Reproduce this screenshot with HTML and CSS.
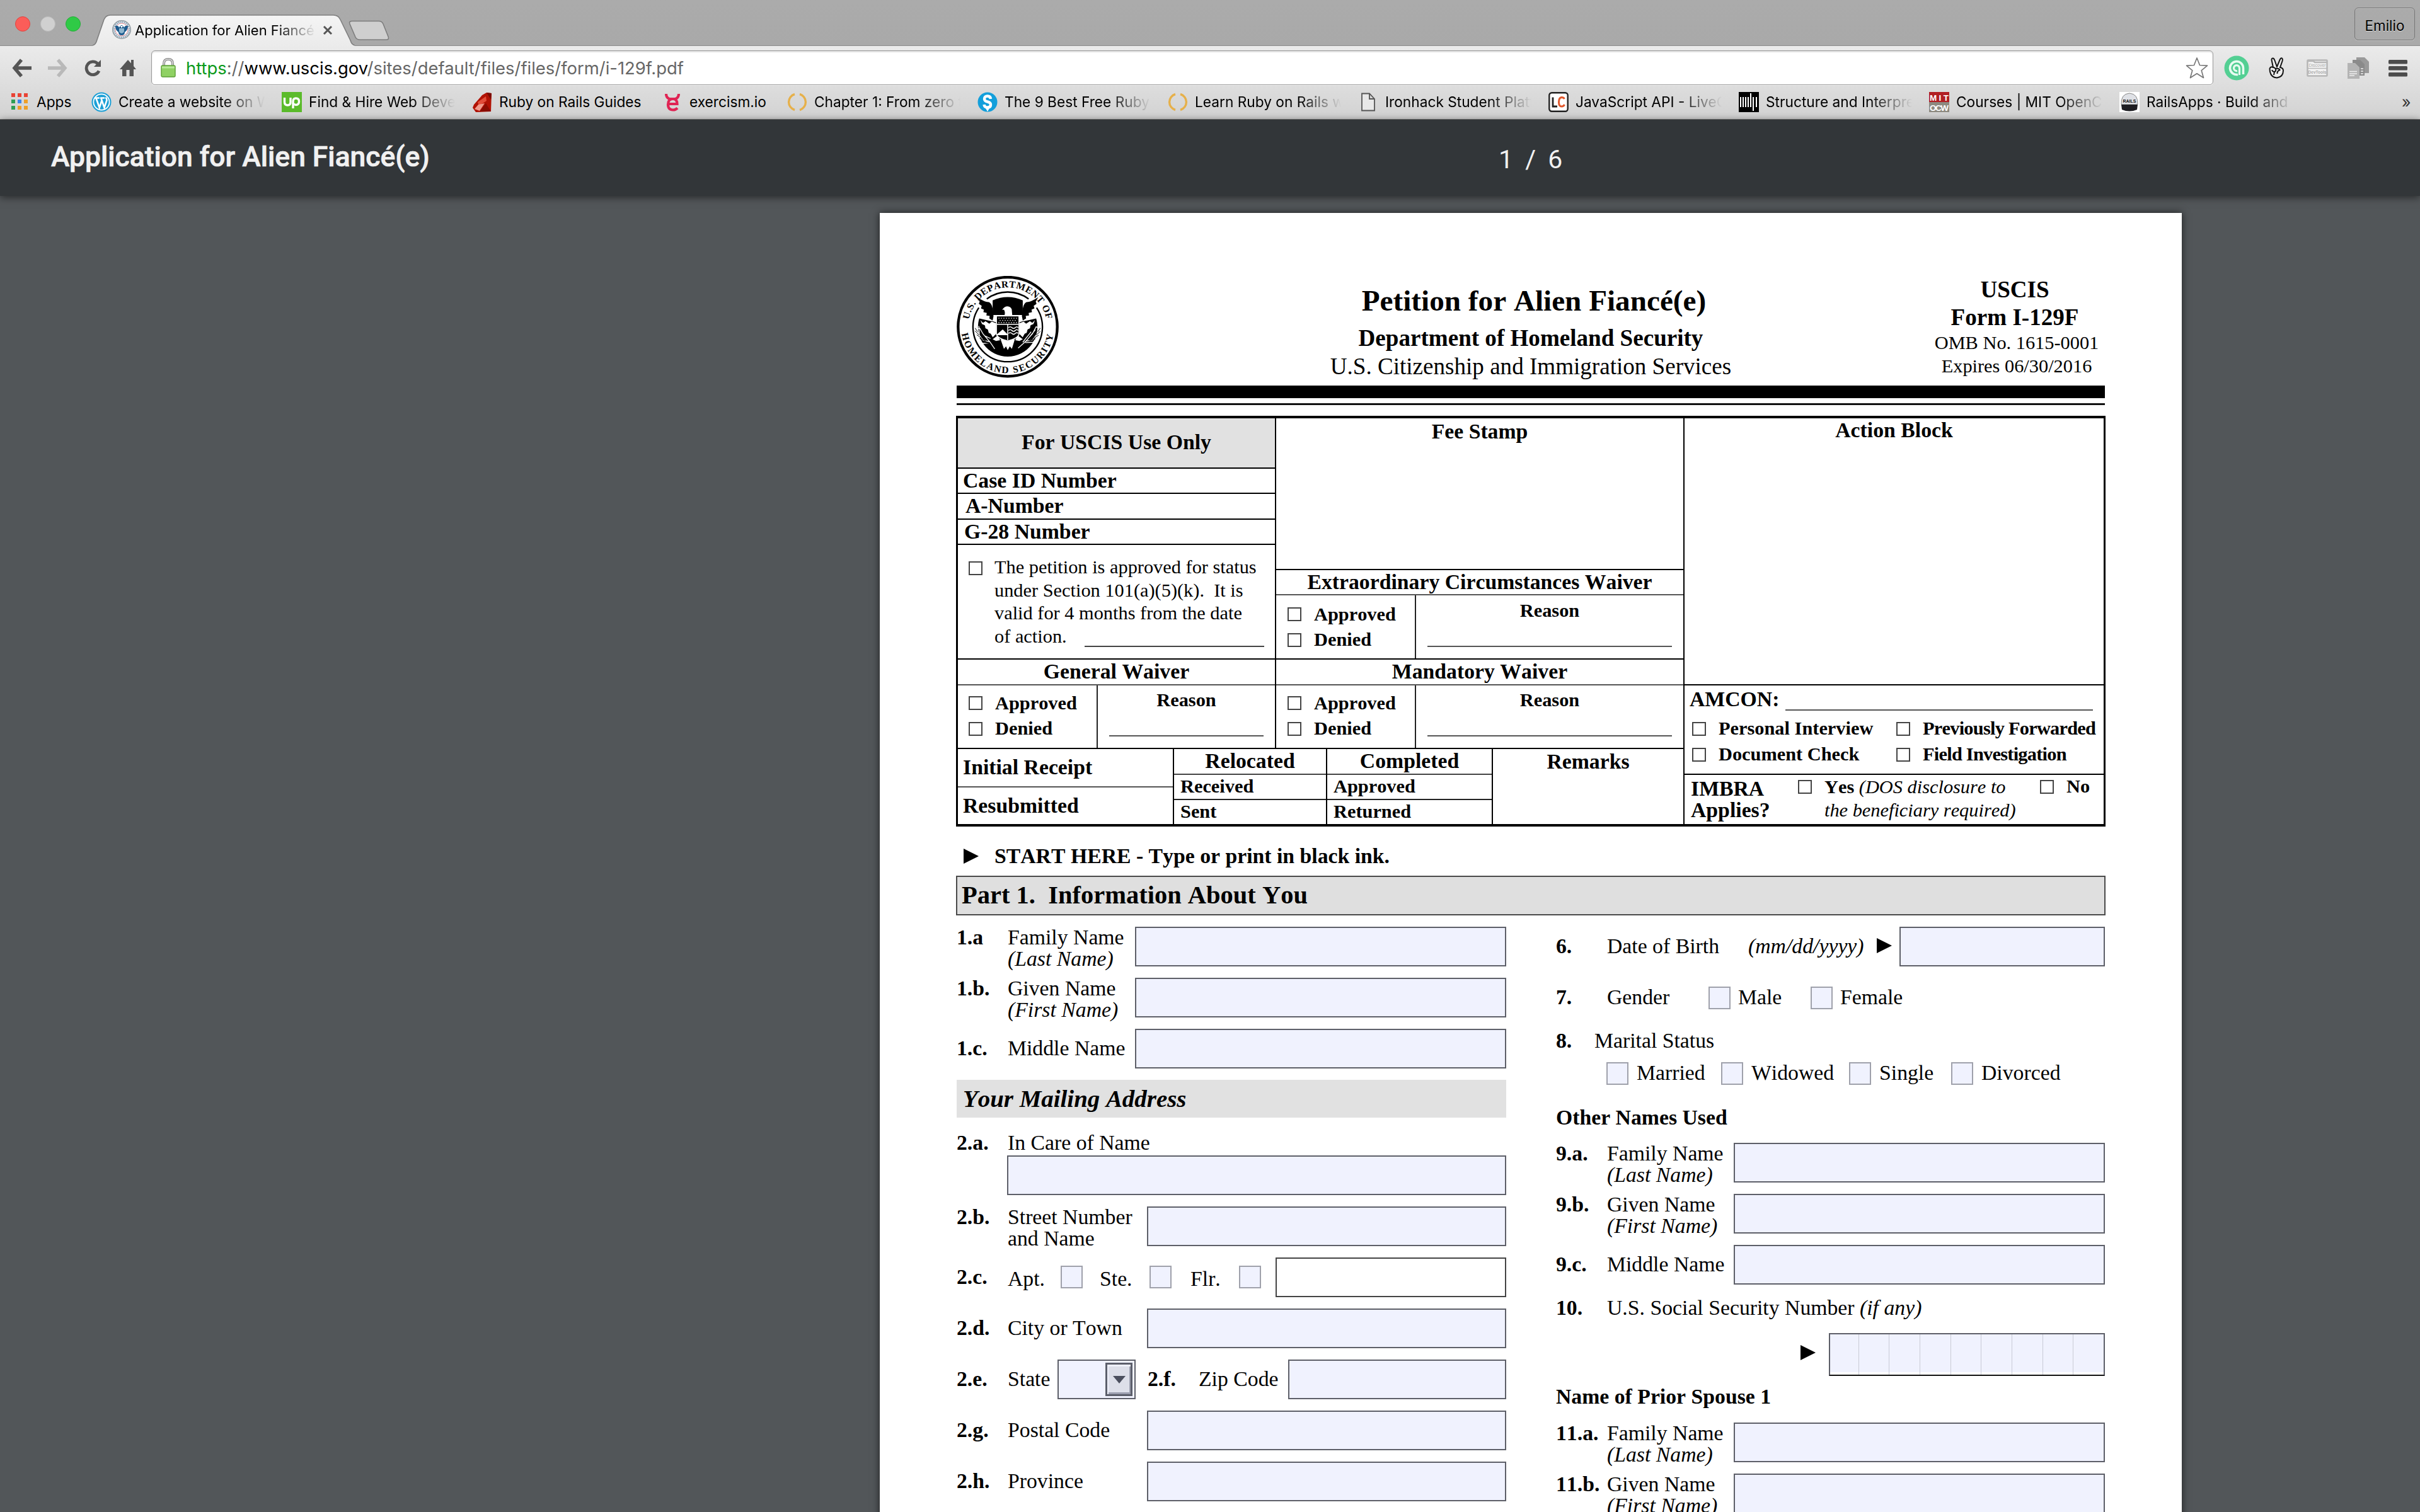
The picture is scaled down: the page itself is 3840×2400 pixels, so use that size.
FILE: index.html
```html
<!DOCTYPE html>
<html lang="en">
<head>
<meta charset="utf-8">
<title>Application for Alien Fiancé(e)</title>
<link rel="stylesheet" href="styles.css">
</head>
<body>
<header class="chrome">
  <div class="tabstrip">
    <div class="lights"><i class="light red"></i><i class="light off"></i><i class="light green"></i></div>
    <div class="tab">
      <svg class="tab-shape" viewBox="0 0 416 50" width="416" height="50"><defs><linearGradient id="tg" x1="0" y1="0" x2="0" y2="1"><stop offset="0" stop-color="#f4f4f4"/><stop offset="1" stop-color="#ebebeb"/></linearGradient></defs><path d="M0 49 Q5 48 7 40 L18 8 Q21 1 28 1 H382 Q390 1 393 8 L409 41 Q411 48 416 49 V50 H0 Z" fill="url(#tg)"/><path d="M0 49 Q5 48 7 40 L18 8 Q21 1 28 1 H382 Q390 1 393 8 L409 41 Q411 48 416 49" fill="none" stroke="#7f7f7f" stroke-width="1.6"/></svg>
      <svg class="favicon" viewBox="0 0 30 30" width="30" height="30"><circle cx="15" cy="15" r="14.2" fill="#e9edf0" stroke="#8d989f" stroke-width="1.5"/><circle cx="15" cy="15" r="12" fill="none" stroke="#7a98ae" stroke-width="2" stroke-dasharray="1.6 1.4"/><circle cx="15" cy="15" r="10" fill="#fff" stroke="#e08a90" stroke-width="1"/><path d="M5 9 Q10 8 11 12 Q15 4 19 12 Q20 8 25 9 Q25 16 20 19 Q20 24 15 24 Q10 24 10 19 Q5 16 5 9Z" fill="#1d5c8e"/><path d="M11 13 h8 v4 q0 3-4 4 q-4-1-4-4z" fill="#8fb6cf"/><path d="M13 9h4l-2 4z" fill="#fff"/></svg>
      <span class="tab-title">Application for Alien Fiancé(e)</span>
      <svg class="tab-close" viewBox="0 0 16 16" width="16" height="16"><path d="M2 2 L14 14 M14 2 L2 14" stroke="#555" stroke-width="3"/></svg>
    </div>
    <svg class="newtab" viewBox="0 0 66 34" width="66" height="34"><path d="M8 1.5 H48 Q53 1.5 55 6 L63 26 Q65 31 60 31 H18 Q13 31 11 27 L2 6 Q0 1.5 6 1.5Z" fill="#cfcfcf" stroke="#7d7d7d" stroke-width="1.6"/></svg>
    <div class="profile">Emilio</div>
  </div>
  <div class="toolbar">
    <svg class="nav" viewBox="0 0 32 30" width="32" height="30"><path d="M15 2 L4 15 L15 28 M4 15 H31" fill="none" stroke="#555" stroke-width="5.4"/></svg>
    <svg class="nav" viewBox="0 0 32 30" width="32" height="30"><path d="M17 2 L28 15 L17 28 M28 15 H1" fill="none" stroke="#b9b9b9" stroke-width="5.4"/></svg>
    <svg class="nav" viewBox="0 0 28 28" width="28" height="28"><path d="M22 7 A10.4 10.4 0 1 0 24 18.5" fill="none" stroke="#555" stroke-width="4.8"/><path d="M27 1 V12 H16 Z" fill="#555"/></svg>
    <svg class="nav" viewBox="0 0 26 28" width="26" height="28"><path d="M13 1 L18 6.4 V1 H22 V11 L26 16 H22 V27 H15.5 V17 H10.5 V27 H4 V16 H0 Z" fill="#555"/></svg>
    <div class="omnibox">
      <svg class="lock" viewBox="0 0 24 31" width="24" height="31"><path d="M5 14 V9 Q5 2 12 2 Q19 2 19 9 V14" fill="none" stroke="#8c8c8c" stroke-width="4"/><path d="M5 14 V9 Q5 2 12 2 Q19 2 19 9 V14" fill="none" stroke="#d9d9d9" stroke-width="1.6"/><rect x="1" y="12" width="22" height="18" rx="2" fill="#8fd163" stroke="#5c9f36" stroke-width="1.4"/><path d="M2 15 H22" stroke="#b5e894" stroke-width="3"/></svg>
      <span class="url"><span class="secure">https</span>://<span class="host">www.uscis.gov</span>/sites/default/files/files/form/i-129f.pdf</span>
      <svg class="star" viewBox="0 0 38 36" width="38" height="36"><path d="M19 2 L23.5 13.5 L35.500 14.200 L26.200 21.800 L29.500 33.500 L19 26.800 L8.500 33.500 L11.800 21.800 L2.500 14.200 L14.500 13.500 Z" fill="#fff" stroke="#777" stroke-width="1.7" stroke-linejoin="round"/></svg>
    </div>
    <div class="extensions">
      <svg viewBox="0 0 40 40" width="40" height="40"><circle cx="20" cy="20" r="19.500" fill="#53cf93"/><path d="M22 30.300 A10.500 10.500 0 1 1 30.500 20 V30" fill="none" stroke="#e8fbf1" stroke-width="3.600"/><path d="M24.500 31 V20.500 A4.500 4.500 0 1 0 21 24.500" fill="none" stroke="#e8fbf1" stroke-width="3.200"/></svg>
      <svg viewBox="0 0 26 34" width="26" height="34"><path d="M7 16 L4.500 4 Q4.500 1 7 1.500 Q8.500 2 9.500 5 L13 15 L18 3 Q20 0 21.500 2 Q22.300 3 21.500 6 L18 16 Q23 17 23 21 Q23 31 13 32.500 Q4 32 2 23 L1.500 18 Q3 14 7 16 Q10 16 11 19 Q12 22 9 23 Q6 23 5 20 M11 18 Q16 17 17.500 20 Q13 22 13.500 26 M9 23 L8 28" fill="#eee" stroke="#151515" stroke-width="2"/></svg>
      <svg viewBox="0 0 34 28" width="34" height="28"><rect x="1.500" y="1.500" width="31" height="25" rx="1" fill="#f3f3f3" stroke="#b7b7b7" stroke-width="2.600"/><path d="M1 3 H11 L13 5 H33" stroke="#b7b7b7" stroke-width="2.500" fill="none"/><path d="M1 14.500 H33" stroke="#b7b7b7" stroke-width="1.500"/><text x="17" y="12" text-anchor="middle" class="dt">Discover</text><text x="17" y="23" text-anchor="middle" class="dt bold">DevTools</text></svg>
      <svg viewBox="0 0 36 36" width="36" height="36"><path d="M14 1 H27 L34 8 V26 H14Z" fill="#9a9a9a"/><path d="M8 5 H20 L27 12 V30 H8Z" fill="#8a8a8a"/><path d="M0 10 H12 L19 17 V35 H0Z" fill="#b4b4b4"/><path d="M3 23.500 H15 M3 27 H15 M3 30 H11 M21 19 H25 M21 23 H25 M21 27 H25" stroke="#eee" stroke-width="1.500"/></svg>
      <svg viewBox="0 0 30 28" width="30" height="28"><g fill="#4c4c4c"><rect width="30" height="6.500" y="1" rx="1.500"/><rect width="30" height="6.500" y="11" rx="1.500"/><rect width="30" height="6.500" y="21" rx="1.500"/></g></svg>
    </div>
  </div>
  <nav class="bookmarks">
    <a class="bm apps"><svg viewBox="0 0 27 27" width="27" height="27"><path fill="#e94335" d="M0 0h6v6H0zM10 0h6v6h-6zM20 0h6v6h-6z"/><path fill="#2f9e55" d="M0 10h6v6H0zM0 20h6v6H0z"/><path fill="#3b86ee" d="M10 10h6v6h-6z"/><path fill="#ee9f28" d="M20 10h6v6h-6zM10 20h6v6h-6zM20 20h6v6h-6z"/></svg><span>Apps</span></a>
    <a class="bm"><svg viewBox="0 0 32 32" width="32" height="32"><circle cx="16" cy="16" r="15.500" fill="#1a9fd6"/><circle cx="16" cy="16" r="12.600" fill="#1a9fd6" stroke="#fff" stroke-width="1.800"/><path d="M5.500 9.500 H13 M7.500 10 L12.800 25 L16.500 13.500 M14 9.500 H21 M15.500 10 L20.500 25 L24.500 13 Q24.500 10.500 22.500 8.500" fill="none" stroke="#fff" stroke-width="2.600"/></svg><span>Create a website on WordPress</span></a>
    <a class="bm"><svg viewBox="0 0 32 32" width="32" height="32"><rect width="32" height="32" fill="#5bbb2b"/><path d="M4.500 9 V16 Q4.500 21 9.500 21 Q14 21 14 16 V9 M18 26 V15 Q18 10 22.500 10 Q27.500 10 27.500 15 Q27.500 20.500 22.500 20.500 Q20 20.500 17 17" fill="none" stroke="#fff" stroke-width="3.400"/></svg><span>Find &amp; Hire Web Developers</span></a>
    <a class="bm"><svg viewBox="0 0 32 32" width="32" height="32"><path d="M1 25 L3 20 L16 5 L23 1 L31 2 L30 31 L6 32 Z" fill="#b11204"/><path d="M23 1 L31 2 L30 12Z" fill="#7a0b03"/><path d="M9 16 L22 7 L23 14 L11 22Z" fill="#e34d3a"/><path d="M4 27 L10 20 L20 18 L12 30Z" fill="#f09a8c"/><path d="M22 18 L30 31 L12 31Z" fill="#8b0d03"/></svg><span>Ruby on Rails Guides</span></a>
    <a class="bm short"><svg viewBox="0 0 32 32" width="32" height="32"><path d="M6 3 Q6 9 11 11 H21 Q26 9 26 3 M9.500 19 H23.500 Q23.500 11 16.500 11 Q9 11 9 20 Q9 28.500 17 28.500 Q21 28.500 24 25.500" fill="none" stroke="#e02454" stroke-width="4.200"/></svg><span>exercism.io</span></a>
    <a class="bm"><svg viewBox="0 0 32 32" width="32" height="32"><path d="M12 3.500 A13 13 0 0 0 12 28.500 M20 3.500 A13 13 0 0 1 20 28.500" fill="none" stroke="#e6b04a" stroke-width="3.400"/></svg><span>Chapter 1: From zero to deploy</span></a>
    <a class="bm"><svg viewBox="0 0 32 32" width="32" height="32"><circle cx="16" cy="16" r="15.500" fill="#139fdb"/><path d="M21 11 Q20.500 6.500 16 6.500 Q11 6.500 11 11 Q11 14.500 16 15.500 Q21 16.500 21 20.500 Q21 24.500 16 24.500 Q11 24.500 10.500 20" fill="none" stroke="#fff" stroke-width="4.400"/><path d="M13 26 L16 31 L19 26Z" fill="#fff"/></svg><span>The 9 Best Free Ruby Resources</span></a>
    <a class="bm"><svg viewBox="0 0 32 32" width="32" height="32"><path d="M12 3.500 A13 13 0 0 0 12 28.500 M20 3.500 A13 13 0 0 1 20 28.500" fill="none" stroke="#e6b04a" stroke-width="3.400"/></svg><span>Learn Ruby on Rails with</span></a>
    <a class="bm"><svg viewBox="0 0 32 32" width="32" height="32"><path d="M6 2.500 H18 L26 11 V29.500 H6Z M18 2.500 V11 H26" fill="#e8e8e8" stroke="#555" stroke-width="1.800"/></svg><span>Ironhack Student Platform</span></a>
    <a class="bm"><svg viewBox="0 0 32 32" width="32" height="32"><rect x="1.300" y="1.300" width="29.400" height="29.400" rx="4" fill="#fff" stroke="#222" stroke-width="2.400"/><path d="M7 8.500 V23 H14" fill="none" stroke="#222" stroke-width="2.800"/><path d="M25.500 11 Q24 8.500 21 8.500 Q16.500 9 16.500 16 Q16.500 23 21 23 Q24 23 25.500 20" fill="none" stroke="#e2582c" stroke-width="3"/></svg><span>JavaScript API - LiveCode</span></a>
    <a class="bm"><svg viewBox="0 0 32 32" width="32" height="32"><rect width="32" height="32" fill="#000"/><path d="M3 8V24M7 8V24M11 8V24M15 8V24M19 2V24M23 8V30M28 8V24" stroke="#fff" stroke-width="2"/></svg><span>Structure and Interpretation</span></a>
    <a class="bm"><svg viewBox="0 0 32 32" width="32" height="32"><rect width="32" height="16" fill="#b11f24"/><rect y="16" width="32" height="16" fill="#8d8a80"/><text x="16" y="13.500" text-anchor="middle" textLength="30" class="mit">MIT</text><text x="16" y="30" text-anchor="middle" textLength="30" class="mit">OCW</text></svg><span>Courses | MIT OpenCourseWare</span></a>
    <a class="bm"><svg viewBox="0 0 32 32" width="32" height="32"><rect width="32" height="32" fill="#fff"/><path d="M3 20 Q2 3 16 2 Q30 3 29 20Z" fill="#dfe1e6" stroke="#888" stroke-width="1"/><path d="M3 20 H29 L28 28 Q16 33 4 28Z" fill="#1d1d22"/><text x="16" y="16.500" text-anchor="middle" class="rails">RAILS</text></svg><span>RailsApps · Build and Learn</span></a>
    <span class="more">»</span>
  </nav>
</header>

<div class="pdfbar"><h1>Application for Alien Fiancé(e)</h1><span class="pages">1 / 6</span></div>

<main class="viewer">
<article class="paper">
  <div class="masthead">
    <svg class="seal" viewBox="24 23 488 488" width="162" height="162">
      <defs><path id="arcTop" d="M80 266 A188 188 0 0 1 456 266"/><path id="arcBot" d="M46 266 A222 222 0 0 0 490 266"/></defs>
      <circle cx="268" cy="266" r="237" fill="#fff" stroke="#000" stroke-width="13"/>
      <text class="seal-text top"><textPath href="#arcTop" startOffset="50%" text-anchor="middle">U.S. DEPARTMENT OF</textPath></text>
      <text class="seal-text bottom"><textPath href="#arcBot" startOffset="50%" text-anchor="middle">HOMELAND SECURITY</textPath></text>
      <path d="M168 133 A167 167 0 0 1 368 133 M130 175 A166 166 0 1 0 406 175" fill="none" stroke="#000" stroke-width="7"/>
      <path d="M196 140 Q268 108 340 140 V210 H196Z"/>
      <path d="M122 125 Q160 150 178 148 Q198 156 200 216 L196 236 L180 226 L182 214 L166 212 L168 200 L152 196 L154 184 L140 178 L144 166 L130 156 L134 146 Z"/>
      <path d="M414 125 Q376 150 358 148 Q338 156 336 216 L340 236 L356 226 L354 214 L370 212 L368 200 L384 196 L382 184 L396 178 L392 166 L406 156 L402 146 Z"/>
      <path d="M132 226 A142 142 0 1 0 404 226 L300 250 H236Z"/>
      <path d="M134 228 L150 246 L162 238 L180 250 L192 240 L214 248 V300 L196 318 L186 300 L176 296 L172 280 L160 274 L158 260 L144 254Z M402 228 L386 246 L374 238 L356 250 L344 240 L322 248 V300 L340 318 L350 300 L360 296 L364 280 L376 274 L378 260 L392 254Z" fill="#fff" stroke="#000" stroke-width="3"/>
      <path d="M110 276 L134 272 L150 300 L184 340 L206 372 M120 290 L150 330 L182 338 M122 310 L140 346 L176 344 M160 310 L186 322 M130 262 L134 330 M426 276 L404 266 L386 300 L352 338 L318 368 M416 290 L386 330 L350 336 M412 310 L390 340 L352 342 M380 290 L340 340 M400 280 L360 330" fill="none" stroke="#fff" stroke-width="4"/>
      <path d="M112 272 L124 290 M112 286 L132 306 M120 304 L144 322 M134 322 L164 334 M146 338 L182 346 M424 272 L412 290 M424 288 L404 306 M416 306 L392 322 M400 324 L370 334" fill="none" stroke="#000" stroke-width="3"/>
      <path d="M252 214 Q258 196 250 184 L242 186 Q250 168 268 168 Q288 170 288 190 L290 214Z M234 326 L250 372 L260 360 L268 378 L278 360 L288 372 L302 326Z M196 326 L220 308 L232 330 L212 334Z M340 326 L316 308 L304 330 L324 334Z" fill="#fff"/>
      <path d="M214 214 H322 V300 Q318 322 268 334 Q218 322 214 300Z" stroke="#fff" stroke-width="5"/>
      <path d="M224 225 H314 M230 236 H310 M224 246 H314" stroke="#fff" stroke-width="4" stroke-dasharray="4 8"/>
      <path d="M216 254 H320 M268 254 V330 M218 304 L244 282 L266 304Z M272 270 q8-8 16 0 t16 0 t14 0 M272 284 q8-8 16 0 t16 0 t14 0 M272 298 q8-8 16 0 t16 0 t14 0" fill="none" stroke="#fff" stroke-width="4.500"/>
      <path d="M216 304 L244 280 L266 304Z" fill="#fff"/>
    </svg>
    <div class="agency">
      <h2>Petition for Alien Fiancé(e)</h2>
      <p><b>Department of Homeland Security</b></p>
      <p>U.S. Citizenship and Immigration Services</p>
    </div>
    <div class="formno">
      <p><b>USCIS</b></p><p><b>Form I-129F</b></p>
      <p class="small">OMB No. 1615-0001</p><p class="small">Expires 06/30/2016</p>
    </div>
  </div>
  <div class="rule thick"></div>
  <div class="rule thin"></div>

  <section class="office">
    <div class="office-left">
      <div class="office-top">
        <div class="col colA">
          <div class="cell center shade usehead">For USCIS Use Only</div>
          <div class="cell label case">Case ID Number</div>
          <div class="cell label anum">A-Number</div>
          <div class="cell label gnum">G-28 Number</div>
          <div class="cell petition"><i class="cb"></i><p>The petition is approved for status<br>under Section 101(a)(5)(k).&nbsp; It is<br>valid for 4 months from the date<br>of action.<span class="blank"></span></p></div>
          <div class="cell center waiver-title">General Waiver</div>
          <div class="waiver"><div class="choices"><p><i class="cb"></i>Approved</p><p><i class="cb"></i>Denied</p></div><div class="reason">Reason</div></div>
        </div>
        <div class="col colB">
          <div class="cell fee">Fee Stamp</div>
          <div class="cell center extra-title">Extraordinary Circumstances Waiver</div>
          <div class="waiver tall"><div class="choices"><p><i class="cb"></i>Approved</p><p><i class="cb"></i>Denied</p></div><div class="reason">Reason</div></div>
          <div class="cell center waiver-title">Mandatory Waiver</div>
          <div class="waiver"><div class="choices"><p><i class="cb"></i>Approved</p><p><i class="cb"></i>Denied</p></div><div class="reason">Reason</div></div>
        </div>
      </div>
      <div class="receipts">
        <div class="rc rc1"><div class="cell label r-initial">Initial Receipt</div><div class="cell label r-last">Resubmitted</div></div>
        <div class="rc rc2"><div class="cell center r-head">Relocated</div><div class="cell r-mid">Received</div><div class="cell r-end">Sent</div></div>
        <div class="rc rc3"><div class="cell center r-head">Completed</div><div class="cell r-mid">Approved</div><div class="cell r-end">Returned</div></div>
        <div class="rc rc4"><div class="cell center remarks">Remarks</div></div>
      </div>
    </div>
    <div class="office-right">
      <div class="cell action">Action Block</div>
      <div class="amcon">
        <div class="amcon-line"><span>AMCON:</span><i></i></div>
        <div class="amcon-grid"><p><i class="cb"></i>Personal Interview</p><p class="tight"><i class="cb"></i>Previously Forwarded</p><p><i class="cb"></i>Document Check</p><p class="tight"><i class="cb"></i>Field Investigation</p></div>
      </div>
      <div class="imbra"><p class="imbra-label">IMBRA<br>Applies?</p><i class="cb"></i><p class="imbra-yes">Yes <em>(DOS disclosure to<br>the beneficiary required)</em></p><i class="cb"></i><p class="imbra-no">No</p></div>
    </div>
  </section>

  <p class="start"><i class="tri"></i><b>START HERE - Type or print in black ink.</b></p>
  <h3 class="part">Part 1.&nbsp; Information About You</h3>

  <div class="columns">
    <div class="side left">
      <div class="row"><b class="n">1.a</b><p class="two">Family Name<br><em>(Last Name)</em></p><i class="box w589"></i></div>
      <div class="row"><b class="n">1.b.</b><p class="two">Given Name<br><em>(First Name)</em></p><i class="box w589"></i></div>
      <div class="row"><b class="n mid">1.c.</b><p class="mid">Middle Name</p><i class="box w589"></i></div>
      <h4 class="band">Your Mailing Address</h4>
      <div class="row care"><b class="n">2.a.</b><p class="care-label">In Care of Name</p><i class="box w792"></i></div>
      <div class="row"><b class="n">2.b.</b><p class="two">Street Number<br>and Name</p><i class="box w570"></i></div>
      <div class="row"><b class="n mid">2.c.</b><p class="apt">Apt.</p><i class="check"></i><p class="ste">Ste.</p><i class="check"></i><p class="flr">Flr.</p><i class="check"></i><i class="box plain w366"></i></div>
      <div class="row"><b class="n mid">2.d.</b><p class="mid">City or Town</p><i class="box w570"></i></div>
      <div class="row"><b class="n mid">2.e.</b><p class="mid state">State</p><div class="combo"><span class="drop"><svg viewBox="0 0 20 12" width="20" height="12"><path d="M0 0 H20 L10 12Z" fill="#4b4f5e"/></svg></span></div><b class="mid n2f">2.f.</b><p class="mid zip">Zip Code</p><i class="box w346"></i></div>
      <div class="row"><b class="n mid">2.g.</b><p class="mid">Postal Code</p><i class="box w570"></i></div>
      <div class="row"><b class="n mid">2.h.</b><p class="mid">Province</p><i class="box w570"></i></div>
    </div>
    <div class="side right">
      <div class="row"><b class="n mid">6.</b><p class="mid dob">Date of Birth</p><p class="mid"><em>(mm/dd/yyyy)</em></p><i class="tri dobtri"></i><i class="box w326"></i></div>
      <div class="row gender"><b class="n mid">7.</b><p class="mid g-label">Gender</p><i class="check"></i><p class="mid male">Male</p><i class="check"></i><p class="mid">Female</p></div>
      <div class="line marital"><b class="n8">8.</b><p>Marital Status</p></div>
      <div class="statuses"><i class="check"></i><p class="married">Married</p><i class="check"></i><p class="widowed">Widowed</p><i class="check"></i><p class="single">Single</p><i class="check"></i><p>Divorced</p></div>
      <h5 class="sub other">Other Names Used</h5>
      <div class="row"><b class="n">9.a.</b><p class="two">Family Name<br><em>(Last Name)</em></p><i class="box w589"></i></div>
      <div class="row"><b class="n">9.b.</b><p class="two">Given Name<br><em>(First Name)</em></p><i class="box w589"></i></div>
      <div class="row"><b class="n mid">9.c.</b><p class="mid">Middle Name</p><i class="box w589"></i></div>
      <div class="line ssn"><b class="n">10.</b><p>U.S. Social Security Number <em>(if any)</em></p></div>
      <div class="ssn-row"><i class="tri"></i><div class="comb"><i></i><i></i><i></i><i></i><i></i><i></i><i></i><i></i><i></i></div></div>
      <h5 class="sub prior">Name of Prior Spouse 1</h5>
      <div class="row"><b class="n">11.a.</b><p class="two">Family Name<br><em>(Last Name)</em></p><i class="box w589"></i></div>
      <div class="row"><b class="n">11.b.</b><p class="two">Given Name<br><em>(First Name)</em></p><i class="box w589"></i></div>
    </div>
  </div>
</article>
</main>
</body>
</html>
```
FILE: styles.css
```css
*{box-sizing:border-box}
html,body{margin:0;height:2400px;overflow:hidden}
body{width:3840px;background:#525659;font-family:Inter,"Liberation Sans",sans-serif;color:#000}
h1,h2,h3,h4,h5{margin:0;font-weight:normal}
p{margin:0}
svg{display:block;flex:none}
i{flex:none}

/* browser chrome */
.chrome{height:190px;background:linear-gradient(#ebebeb 72px,#d2d2d2 189px);border-bottom:1px solid #6e6e6e}
.tabstrip{height:73px;display:flex;align-items:flex-end;background:linear-gradient(#ababab,#a9a9a9);border-bottom:1px solid #8c8c8c}
.lights{display:flex;gap:16px;padding:0 0 22px 24px;width:147px}
.light{width:24px;height:24px;border-radius:50%}
.light.red{background:#fb5d59;border:1px solid #e0443f}
.light.off{background:#d0d0d0;border:1px solid #bdbdbd}
.light.green{background:#2fca46;border:1px solid #23ae38}
.tab{position:relative;width:416px;height:50px;margin-bottom:-1px;display:flex;align-items:center;padding-left:31px}
.tab-shape{position:absolute;left:0;top:0}
.favicon{position:relative;margin-top:-3px}
.tab-title{position:relative;margin-left:6px;width:286px;overflow:hidden;white-space:nowrap;font-size:22px;line-height:30px;margin-top:-1px;-webkit-mask-image:linear-gradient(90deg,#000 225px,transparent 288px)}
.tab-close{position:relative;margin-left:12px}
.newtab{margin:0 0 6px -10px}
.profile{margin:0 8px 8px auto;width:96px;height:52px;border:1.500px solid #777;border-radius:6px;font-size:22.400px;line-height:55px;text-align:center;text-shadow:0 1px 0 #ddd;box-shadow:0 1px 0 #c4c4c4,inset 0 1px 0 #bdbdbd}
.toolbar{height:69px;display:flex;align-items:center;padding-left:19px}
.nav{margin-right:24px}
.nav:nth-child(2){margin-right:26px}
.nav:nth-child(3){margin-right:29px}
.nav:nth-child(4){margin-right:24px}
.omnibox{width:3272px;height:55px;background:#fff;border:1.500px solid #999;border-radius:6px;box-shadow:inset 0 2px 2px #e4e4e4,0 1px 0 #f2f2f2;display:flex;align-items:center;padding:0 6px 0 14px}
.url{margin-left:16px;font-size:27.430px;line-height:54px;color:#666;white-space:nowrap}
.secure{color:#0b9a1b}
.host{color:#000}
.star{margin-left:auto}
.extensions{display:flex;align-items:center;margin-left:17px}
.extensions svg:nth-child(2){margin-left:31px}
.extensions svg:nth-child(3){margin-left:34px}
.extensions svg:nth-child(4){margin-left:31px}
.extensions svg:nth-child(5){margin-left:29px}
.dt{font:7px "Liberation Sans",sans-serif;fill:#aaa}
.dt.bold{font-weight:bold;font-size:6.500px}
.bookmarks{height:39px;display:flex;align-items:center;padding-left:18px}
.bm{display:flex;align-items:center;width:302px;font-size:22.700px;line-height:38px;white-space:nowrap}
.bm span{margin-left:11px;width:232px;overflow:hidden;-webkit-mask-image:linear-gradient(90deg,#000 165px,transparent 232px)}
.bm.apps{width:127px}
.bm.apps span{margin-left:13px;-webkit-mask-image:none;width:auto}
.bm.short{width:198px}
.bm.short span,.bm:nth-child(4) span{-webkit-mask-image:none}
.more{margin-left:146px;font-size:25px;line-height:34px;color:#333}
.mit{font:bold 13.500px "Liberation Sans",sans-serif;fill:#fff}
.rails{font:bold 7px "Liberation Sans",sans-serif;fill:#111}

/* viewer header */
.pdfbar{position:relative;height:121px;background:#323639;color:#f1f1f1;display:grid;grid-template-columns:2378px auto;box-shadow:0 2px 12px rgba(0,0,0,.55);font-family:Roboto,sans-serif}
.pdfbar h1{padding-left:81px;font-size:44.400px;font-weight:500;line-height:118px;-webkit-text-stroke:.7px #f1f1f1}
.pages{font-size:41px;line-height:126px;word-spacing:7px;letter-spacing:1px}

/* paper */
.viewer{height:2089px;overflow:hidden;padding:27px 0 0 1396px}
.paper{width:2066px;height:2200px;background:#fff;box-shadow:0 0 12px rgba(0,0,0,.65);padding:100px 122px 0;font-family:"Liberation Serif","Times New Roman",serif;font-size:33.740px;font-kerning:none;font-variant-ligatures:none}
.masthead{height:174px;display:grid;grid-template-columns:162px 1fr 286px}
.agency{padding:11px 0 0 134px;text-align:center;font-size:37.100px;line-height:45px}
.agency h2{font-size:47.200px;font-weight:bold;line-height:56px;margin-bottom:9px}
.agency p{padding-right:10px}
.formno{text-align:center;font-size:37.100px;line-height:44px}
.formno .small{font-size:30.370px;line-height:37px;padding-left:6px}
.seal-text{font-size:46px;font-weight:bold;font-family:"Liberation Serif",serif}
.seal-text.top{letter-spacing:1.500px}
.seal-text.bottom{letter-spacing:6.200px}
.rule{background:#000}
.rule.thick{height:20px}
.rule.thin{height:3px;margin-top:8px;background:#111}

/* office-use grid */
.office{margin:17px -1px 0;height:652px;border:3px solid #000;border-width:4px 3px;display:grid;grid-template-columns:1153px 665px;font-weight:bold}
.cell{line-height:37px;border-bottom:2px solid #000}
.center{display:flex;justify-content:center;align-items:center;padding-bottom:2px}
.office-left{border-right:2px solid #000}
.office-top{display:grid;grid-template-columns:505px 646px;height:525px}
.colA{border-right:2px solid #000}
.shade{background:#e1e1e1}
.usehead{height:80px;padding-bottom:4px}
.label{padding-left:8px;display:flex;align-items:center;padding-bottom:2px}
.case{height:40px;padding-left:8px}.anum{height:41px;padding-left:12px}.gnum{height:40px;padding-left:10px}
.petition{height:182px;display:flex;gap:19px;padding:17px 0 0 17px;font-weight:normal;font-size:30.370px}
.petition p{line-height:36.700px;white-space:nowrap}
.petition .cb{margin-top:9px}
.blank{display:inline-block;width:285px;height:2px;background:#444;margin-left:28px;vertical-align:-7px}
.cb{display:block;width:22px;height:22px;border:2px solid #444}
.waiver-title{height:41px;border-color:#555}
.waiver{height:101px;display:grid;grid-template-columns:222px 1fr;border-bottom:2px solid #000;font-size:30.370px}
.waiver.tall{height:102px}
.choices{border-right:2px solid #222;padding:8px 0 0 17px}
.choices p{display:flex;align-items:center;gap:20px;height:40.500px;line-height:38px;padding-bottom:1px}
.choices .cb{margin-top:1px}
.colB .choices{padding-left:18px}
.reason{margin:0 18px;height:81px;border-bottom:2px solid #555;text-align:center;line-height:46px}
.tall .choices{padding-top:10px}
.tall .reason{height:82px;line-height:48px}
.fee{height:241px;text-align:center;padding-top:2px}
.extra-title{height:40px;border-color:#555}
.receipts{display:grid;grid-template-columns:343px 243px 263px 1fr;height:119px}
.rc{border-right:2px solid #000}
.rc4,.rc .r-last,.rc .r-end{border:0}
.r-initial{height:61px;border-color:#555}
.r-last{height:58px}
.r-head{height:41px;border-color:#444}
.r-mid{height:40px;border-color:#222;font-size:30.370px;line-height:36px;padding-left:10px}
.r-end{font-size:30.370px;line-height:37px;padding-left:10px}
.remarks{height:41px;border:0}
.action{height:424px;text-align:center}
.amcon{height:142px;border-bottom:2px solid #000;padding:3px 0 0 8px}
.amcon-line{display:flex;height:38px;line-height:38px}
.amcon-line i{width:488px;height:2px;background:#555;margin:35px 0 0 10px}
.amcon-grid{display:grid;grid-template-columns:324px auto;padding:8px 0 0 4px;font-size:30.370px}
.amcon-grid p{display:flex;align-items:center;gap:20px;height:40.500px;line-height:38px;white-space:nowrap;padding-bottom:2px}
.amcon-grid .tight{letter-spacing:-.75px}
.amcon-grid .cb{margin-top:2px}
.imbra{display:flex;height:78px;font-size:30.370px}
.imbra-label{font-size:33.740px;line-height:33.500px;padding:5px 0 0 10px;width:180px}
.imbra .cb{margin-top:8px}
.imbra-yes{margin-left:20px;line-height:37px;padding-top:1px;width:342px;white-space:nowrap}
.imbra-yes em{font-weight:normal}
.imbra-no{margin-left:20px;line-height:36px}

/* form body */
.tri{display:block;width:0;height:0;border-left:24px solid #000;border-top:12px solid transparent;border-bottom:12px solid transparent}
.start{display:flex;align-items:center;gap:25px;padding-left:11px;margin-top:28px;height:37px;line-height:37px}
.part{height:63px;margin:13px -1px 0;border:2px solid #4a4a4a;background:#dfdfdf;font-weight:bold;font-size:40.500px;line-height:57px;padding-left:7px}
.columns{display:grid;grid-template-columns:872px 871px;gap:79px;padding-top:18px}
.row{display:flex;height:63px;margin-bottom:18px;line-height:34px;white-space:nowrap}
.n{width:81px;flex:none}
.row .mid{line-height:61px}
.box{display:block;height:63px;margin-left:auto;background:#f0f2fe;border:2px solid #5d5f68}
.box.plain{background:#fff;border-color:#444}
.w589{width:589px}.w792{width:792px}.w570{width:570px}.w366{width:366px}.w346{width:346px}.w326{width:326px}
.band{height:60px;margin:1px 0 31px;background:#e1e1e1;font-size:38.900px;font-weight:bold;font-style:italic;line-height:60px;padding-left:10px}
.row.care{height:92px;flex-wrap:wrap;align-content:flex-start}
.row.care .n,.care-label{margin-top:-10px;height:37px;line-height:37px}
.care .box{margin-top:2px}
.care-label{width:780px}
.check{display:block;width:35px;height:36px;background:#f0f2fe;border:2px solid #9fa1ab}
.apt,.ste,.flr{line-height:68px}
.row .check{margin-top:13px}
.apt{width:84px}.ste{width:79px;margin-left:27px;}.flr{width:77px;margin-left:30px}
.state{width:79px}
.combo{width:124px;height:63px;border:2px solid #5d5f68;background:#f0f2fe;padding:3px 3px;display:flex;justify-content:flex-end}
.drop{width:43px;height:53px;border:3px solid #5c5f6b;background:#dddfe9;box-shadow:inset 2px 3px 0 #eef0fa,inset -2px -3px 0 #9c9faf;display:flex;align-items:center;justify-content:center}
.n2f{margin-left:19px;width:81px}
.dob{width:224px}
.dobtri{margin:18px 12px 0 auto}
.dobtri + .box{margin-left:0}
.row .mid+.check{margin-top:14px}
.g-label{width:161px}
.gender .male{margin-left:12px;width:115px}
.gender .check + .mid:last-child{margin-left:12px}
.line,.statuses{display:flex;line-height:38px;height:38px}
.marital{margin-top:1px}
.n8{width:61px}
.statuses{margin:15px 0 0 80px;height:36px;line-height:33px;white-space:nowrap}
.statuses p{margin-left:13px}
.statuses .married{width:134px}.statuses .widowed{width:155px}.statuses .single{width:114px}
.sub{font-weight:bold;font-size:33.740px;line-height:38px;height:38px}
.other{margin:33px 0 21px}
.ssn{margin-top:2px}
.ssn-row{display:flex;justify-content:flex-end;margin-top:21px}
.ssn-row .tri{margin:19px 21px 0 0}
.comb{width:438px;height:68px;border:2px solid #5d5f68;border-bottom-color:#111;background:linear-gradient(#f0f2fe 60px,#fff 60px);display:grid;grid-template-columns:44.500px repeat(8,48.700px)}
.comb i+i{border-left:1.500px solid #c9cbd6}
.prior{margin:14px 0 22px}
```
